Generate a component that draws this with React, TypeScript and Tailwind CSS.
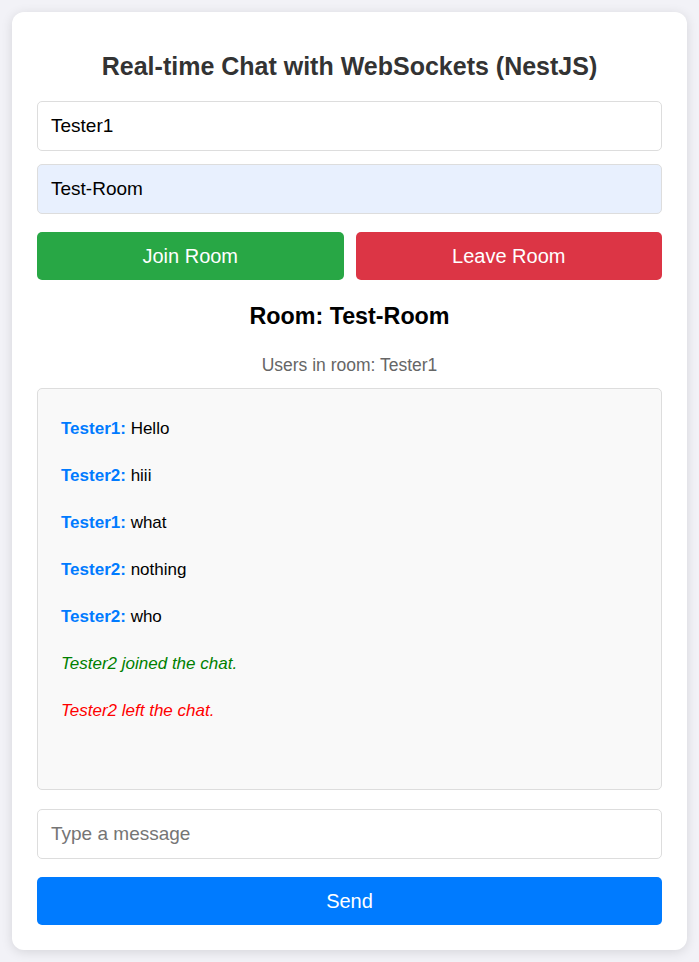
import React from "react";

const msgs = [
  { u: "Tester1", t: "Hello" },
  { u: "Tester2", t: "hiii" },
  { u: "Tester1", t: "what" },
  { u: "Tester2", t: "nothing" },
  { u: "Tester2", t: "who" },
];

export default function App() {
  return (
    <div
      className="min-h-[962px] w-full bg-[#f2f2f7] p-[12px]"
      style={{ fontFamily: '"Liberation Sans", Arial, sans-serif' }}
    >
      <div className="flex w-[675px] flex-col rounded-[12px] bg-white px-[25px] pt-[20px] pb-[25px] shadow-[0_2px_12px_rgba(0,0,0,0.12)]">
        <h2 className="mt-[20px] mb-[20px] text-center text-[25px] font-bold leading-[29px] text-[#333]">
          Real-time Chat with WebSockets (NestJS)
        </h2>
        <div className="flex h-[50px] items-center rounded-[5px] border border-[#ddd] px-[13px] text-[19px] text-black">
          Tester1
        </div>
        <div className="mt-[13px] flex h-[50px] items-center rounded-[5px] border border-[#ddd] bg-[#e8f0fe] px-[13px] text-[19px] text-black">
          Test-Room
        </div>
        <div className="mt-[18px] flex gap-[12px]">
          <button className="h-[48px] flex-1 rounded-[5px] bg-[#28a745] text-[20px] text-white">
            Join Room
          </button>
          <button className="h-[48px] flex-1 rounded-[5px] bg-[#dc3545] text-[20px] text-white">
            Leave Room
          </button>
        </div>
        <h3 className="mt-[23px] text-center text-[23.3px] font-bold leading-[27px] text-black">
          Room: Test-Room
        </h3>
        <p className="mt-[25px] text-center text-[17.5px] leading-[20px] text-[#666]">
          Users in room: Tester1
        </p>
        <div className="mt-[13px] flex h-[402px] flex-col gap-[27px] rounded-[5px] border border-[#ddd] bg-[#f9f9f9] pt-[30px] pl-[23px] text-[17px] leading-[20px]">
          {msgs.map((m, i) => (
            <div key={i} className="text-black">
              <span className="font-bold text-[#007bff]">{m.u}:</span> {m.t}
            </div>
          ))}
          <div className="italic text-[#008000]">Tester2 joined the chat.</div>
          <div className="italic text-[#ff0000]">Tester2 left the chat.</div>
        </div>
        <div className="mt-[19px] flex h-[50px] items-center rounded-[5px] border border-[#ddd] px-[13px] text-[19px] text-[#757575]">
          Type a message
        </div>
        <button className="mt-[18px] h-[48px] w-full rounded-[5px] bg-[#007bff] text-[20px] text-white">
          Send
        </button>
      </div>
    </div>
  );
}
